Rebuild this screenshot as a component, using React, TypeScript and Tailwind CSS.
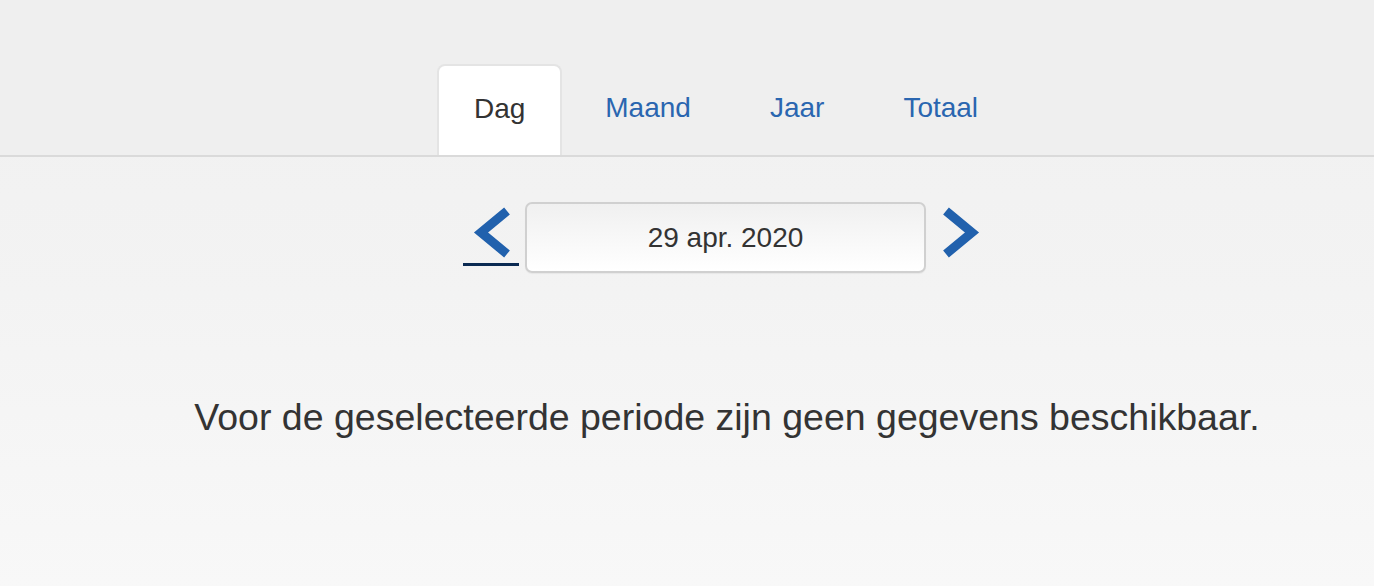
import React from "react";

const tabs = ["Dag", "Maand", "Jaar", "Totaal"];

function Chevron({ dir }: { dir: "left" | "right" }) {
  const d = dir === "left" ? "M44 9 L18 30.5 L44 52" : "M14 9 L40 30.5 L14 52";
  return (
    <svg width="56" height="61" viewBox="0 0 56 61" fill="none">
      <path d={d} stroke="#2161ad" strokeWidth="9" strokeLinecap="butt" strokeLinejoin="miter" />
    </svg>
  );
}

export default function App() {
  return (
    <div
      className="min-h-[586px] w-full bg-linear-to-b from-[#f0f0f0] via-[#f3f3f3] to-[#f8f8f8] text-[#333333]"
      style={{ fontFamily: '"Liberation Sans", Arial, sans-serif' }}
    >
      {/* tab bar */}
      <div className="flex h-[157px] items-end justify-center border-b-2 border-[#dadada] bg-[#efefef] pl-[77px]">
        <div className="flex gap-[7px]">
          {tabs.map((t, i) =>
            i === 0 ? (
              <div
                key={t}
                className="flex h-[91px] items-center rounded-t-[8px] border-x-2 border-t-2 border-[#e4e4e4] bg-white px-[35px] pb-[4px] text-[28px] text-[#333333]"
              >
                {t}
              </div>
            ) : (
              <a
                key={t}
                href="#"
                className="flex h-[91px] items-center px-[36px] pb-[4px] text-[28px] text-[#2a66b0]"
              >
                {t}
              </a>
            )
          )}
        </div>
      </div>

      {/* date navigation */}
      <div className="mt-[45px] flex items-start justify-center pl-[77px]">
        <a href="#" className="mr-[6px] block h-[64px] w-[56px] border-b-[3px] border-[#0b2a52]">
          <Chevron dir="left" />
        </a>
        <div className="flex h-[71px] w-[401px] items-center justify-center rounded-[7px] border-2 border-[#d0d0d0] bg-linear-to-b from-[#f0f0f0] to-white text-[28px] text-[#333333] shadow-[0_1px_1px_rgba(0,0,0,0.05)]">
          29 apr. 2020
        </div>
        <a href="#" className="ml-[6px] block h-[64px] w-[56px]">
          <Chevron dir="right" />
        </a>
      </div>

      {/* empty message */}
      <div className="mt-[116px] flex justify-center pl-[80px]">
        <p className="text-[37.5px] text-[#333333]">
          Voor de geselecteerde periode zijn geen gegevens beschikbaar.
        </p>
      </div>
    </div>
  );
}
